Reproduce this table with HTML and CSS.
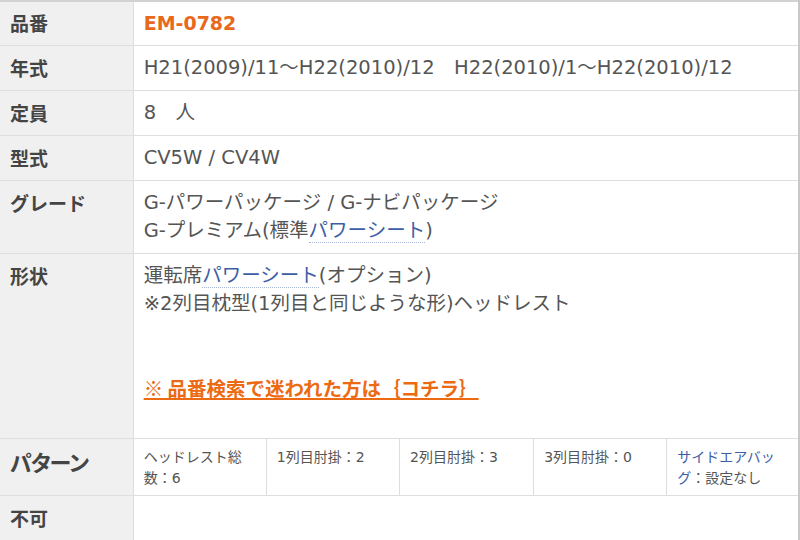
FILE: index.html
```html
<!DOCTYPE html>
<html lang="ja">
<head>
<meta charset="utf-8">
<title>EM-0782</title>
<link rel="stylesheet" href="styles.css">
</head>
<body>
<table class="spec">
  <colgroup>
    <col class="c1"><col class="c2"><col class="c3"><col class="c4"><col class="c5"><col class="c6">
  </colgroup>
  <tr class="first">
    <th>品番</th>
    <td colspan="5"><span class="code">EM-0782</span></td>
  </tr>
  <tr>
    <th>年式</th>
    <td colspan="5">H21(2009)/11～H22(2010)/12　H22(2010)/1～H22(2010)/12</td>
  </tr>
  <tr>
    <th>定員</th>
    <td colspan="5">8　人</td>
  </tr>
  <tr>
    <th>型式</th>
    <td colspan="5">CV5W / CV4W</td>
  </tr>
  <tr>
    <th>グレード</th>
    <td colspan="5">G-パワーパッケージ / G-ナビパッケージ<br>G-プレミアム(標準<a class="term" href="#">パワーシート</a>)</td>
  </tr>
  <tr>
    <th>形状</th>
    <td colspan="5">運転席<a class="term" href="#">パワーシート</a>(オプション)<br>※2列目枕型(1列目と同じような形)ヘッドレスト<br><br><br><a class="notice" href="#">※ 品番検索で迷われた方は｛コチラ｝</a><br>&nbsp;</td>
  </tr>
  <tr class="pattern">
    <th><span class="big">パターン</span></th>
    <td class="sub">ヘッドレスト総数：6</td>
    <td class="sub">1列目肘掛：2</td>
    <td class="sub">2列目肘掛：3</td>
    <td class="sub">3列目肘掛：0</td>
    <td class="sub"><a class="term plain" href="#">サイドエアバッグ</a>：設定なし</td>
  </tr>
  <tr>
    <th>不可</th>
    <td colspan="5"></td>
  </tr>
</table>
</body>
</html>
```

FILE: styles.css
```css
html, body {
  margin: 0;
  padding: 0;
  background: #fff;
}

.spec {
  width: 800px;
  table-layout: fixed;
  border-collapse: collapse;
  border-top: 2px solid #d2d2d2;
  border-right: 2px solid #c8c8c8;
  font-family: "DejaVu Sans", "Noto Sans CJK JP", sans-serif;
  font-size: 19.5px;
  line-height: 28px;
  color: #555;
}

.c1, .c2, .c3, .c5 { width: 133px; }
.c4 { width: 134px; }
.c6 { width: 132px; }

.spec th,
.spec td {
  border-bottom: 1px solid #dedede;
  border-left: 1px solid #dedede;
  padding: 8px 10px;
  vertical-align: top;
  text-align: left;
}

.spec .first th,
.spec .first td {
  padding-top: 7px;
}

.spec th {
  border-left: none;
  background: #f0f0f0;
  color: #444;
  font-size: 19px;
  font-weight: bold;
  font-family: "Noto Sans CJK JP", "DejaVu Sans", sans-serif;
}

.code {
  color: #e8691c;
  font-weight: bold;
  font-size: 19px;
  vertical-align: top;
}

.term {
  color: #3d5ea6;
  text-decoration: none;
  border-bottom: 1px dotted #a9b8d6;
}

.term.plain {
  border-bottom: none;
}

.notice {
  color: #ec6a12;
  font-weight: bold;
  vertical-align: top;
  text-decoration: underline;
  text-decoration-thickness: 2px;
  text-underline-offset: 2px;
  font-family: "Noto Sans CJK JP", sans-serif;
}

.pattern .sub {
  font-size: 14px;
  line-height: 21px;
  padding: 8px 12px 6px 10px;
}

.pattern th {
  padding-bottom: 6px;
}

.big {
  display: inline-block;
  vertical-align: top;
  font-size: 22px;
  line-height: 28px;
  font-feature-settings: "palt";
  letter-spacing: -1px;
}
```
